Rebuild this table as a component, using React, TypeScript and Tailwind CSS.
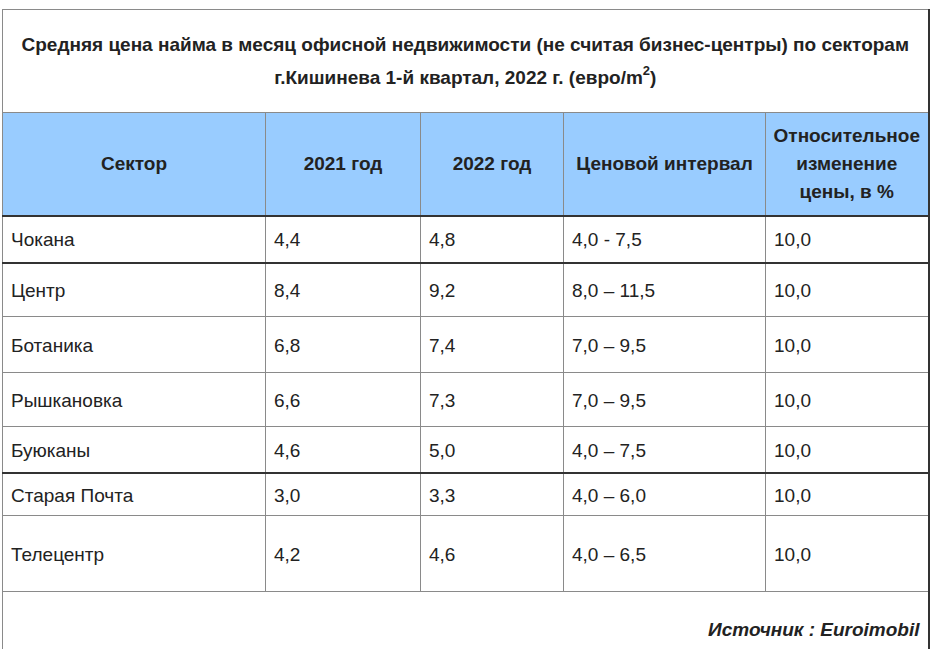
const rows = [
  { name: 'Чокана', y21: '4,4', y22: '4,8', range: '4,0 - 7,5', change: '10,0', h: 'h-[47px]', thick: true },
  { name: 'Центр', y21: '8,4', y22: '9,2', range: '8,0 – 11,5', change: '10,0', h: 'h-[54px]', thick: false },
  { name: 'Ботаника', y21: '6,8', y22: '7,4', range: '7,0 – 9,5', change: '10,0', h: 'h-[56px]', thick: false },
  { name: 'Рышкановка', y21: '6,6', y22: '7,3', range: '7,0 – 9,5', change: '10,0', h: 'h-[54px]', thick: false },
  { name: 'Буюканы', y21: '4,6', y22: '5,0', range: '4,0 – 7,5', change: '10,0', h: 'h-[46px]', thick: true },
  { name: 'Старая Почта', y21: '3,0', y22: '3,3', range: '4,0 – 6,0', change: '10,0', h: 'h-[43px]', thick: false },
  { name: 'Телецентр', y21: '4,2', y22: '4,6', range: '4,0 – 6,5', change: '10,0', h: 'h-[76px]', thick: false },
]

export default function App() {
  const cell = 'border border-[#8a8a8a] px-2 pt-[3px] pb-0 align-middle'
  const head = 'border border-[#8a8a8a] px-1 text-center align-middle font-bold leading-[28px]'

  return (
    <div className="min-h-screen bg-white pt-[9px] pl-[2px] text-[#222] text-[19px]" style={{ fontFamily: '"Liberation Sans", Arial, sans-serif' }}>
      <table className="w-[926px] border-collapse border-r-2 border-r-[#333] table-fixed">
        <colgroup>
          <col className="w-[263px]" />
          <col className="w-[155px]" />
          <col className="w-[143px]" />
          <col className="w-[202px]" />
          <col className="w-[163px]" />
        </colgroup>
        <thead>
          <tr className="h-[103px]">
            <th colSpan={5} className="border border-[#8a8a8a] border-r-2 border-r-[#333] px-1 text-center font-bold leading-[33px]">
              Средняя цена найма в месяц офисной недвижимости (не считая бизнес-центры) по секторам
              <br />
              г.Кишинева 1-й квартал, 2022 г. (евро/m<sup className="text-[13px] align-[3px] leading-none">2</sup>)
            </th>
          </tr>
          <tr className="h-[103px] bg-[#99ccff] border-b-2 border-b-[#333]">
            <th className={head}>Сектор</th>
            <th className={head}>2021 год</th>
            <th className={head}>2022 год</th>
            <th className={head}>Ценовой интервал</th>
            <th className={head + ' border-r-2 border-r-[#333]'}>Относительное изменение цены, в %</th>
          </tr>
        </thead>
        <tbody>
          {rows.map(r => (
            <tr key={r.name} className={`${r.h} ${r.thick ? 'border-b-2 border-b-[#333]' : ''}`}>
              <td className={cell}>{r.name}</td>
              <td className={cell}>{r.y21}</td>
              <td className={cell}>{r.y22}</td>
              <td className={cell}>{r.range}</td>
              <td className={cell + ' border-r-2 border-r-[#333]'}>{r.change}</td>
            </tr>
          ))}
          <tr className="h-[72px]">
            <td colSpan={5} className="border border-[#8a8a8a] border-r-2 border-r-[#333] px-2 pt-[6px] text-right align-middle font-bold italic">
              Источник : Euroimobil
            </td>
          </tr>
        </tbody>
      </table>
    </div>
  )
}
